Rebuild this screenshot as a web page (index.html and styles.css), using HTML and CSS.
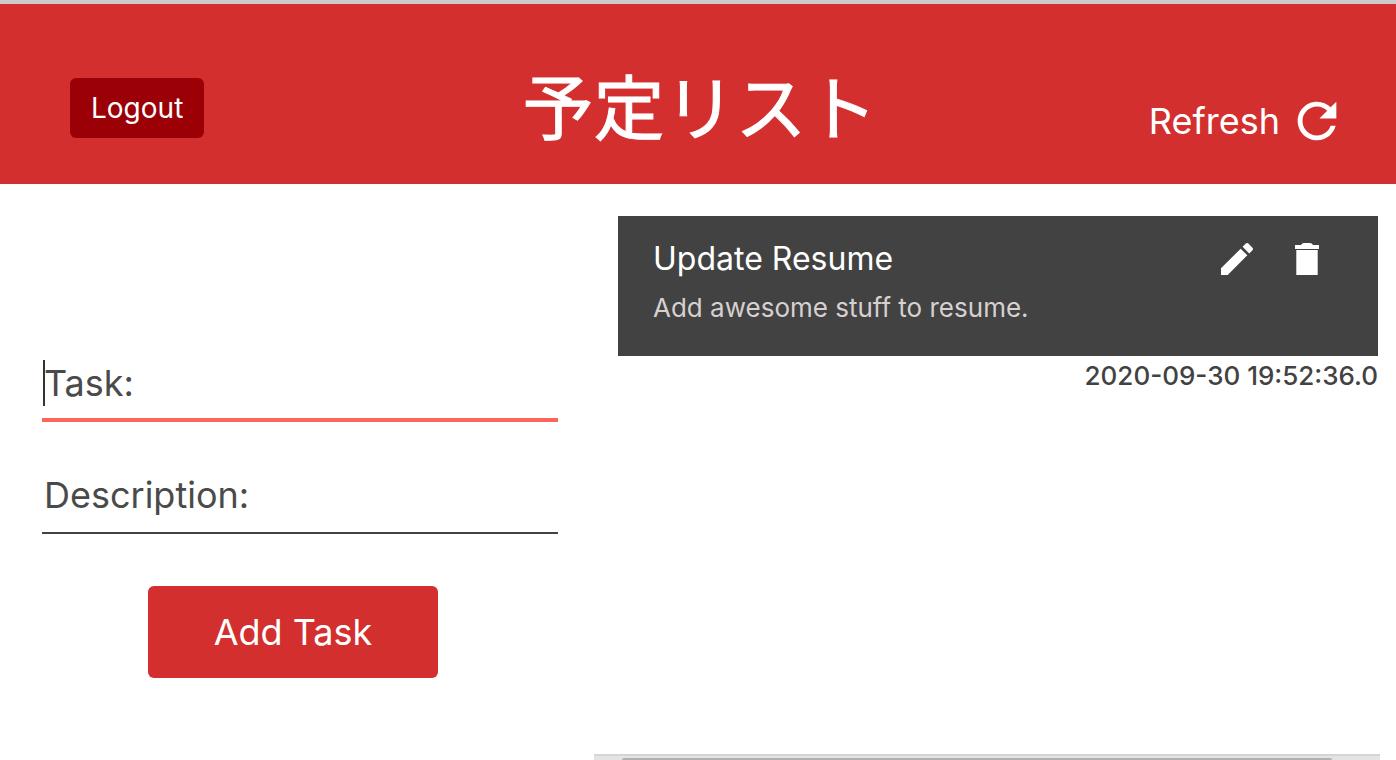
FILE: index.html
```
<!DOCTYPE html>
<html lang="ja">
<head>
<meta charset="utf-8">
<meta name="viewport" content="width=device-width, initial-scale=1">
<title>予定リスト</title>
<link rel="stylesheet" href="styles.css">
</head>
<body class="page">
<header class="header">
  <button class="logout" type="button">Logout</button>
  <h1 class="title">予定リスト</h1>
  <button class="refresh" type="button">
    <span>Refresh</span>
    <svg class="refresh-icon" viewBox="0 0 24 24" aria-hidden="true"><path fill="currentColor" d="M17.65 6.35C16.2 4.9 14.21 4 12 4c-4.42 0-7.99 3.58-7.99 8s3.57 8 7.99 8c3.73 0 6.84-2.55 7.73-6h-2.08c-.82 2.33-3.04 4-5.65 4-3.31 0-6-2.69-6-6s2.69-6 6-6c1.66 0 3.14.69 4.22 1.78L13 11h7V4l-2.35 2.35z"/></svg>
  </button>
</header>
<main class="main">
  <form class="form">
    <div class="field">
      <input class="input input-active" type="text" placeholder="Task:" aria-label="Task">
      <span class="caret"></span>
    </div>
    <div class="field">
      <input class="input" type="text" placeholder="Description:" aria-label="Description">
    </div>
    <button class="add" type="button">Add Task</button>
  </form>
  <section class="tasks">
    <div class="list">
      <article class="card">
        <div class="card-text">
          <h2 class="card-title">Update Resume</h2>
          <p class="card-description">Add awesome stuff to resume.</p>
        </div>
        <div class="actions">
          <button class="action" type="button" aria-label="Edit"><svg class="edit-icon" viewBox="3 3 18 18" aria-hidden="true"><path fill="currentColor" d="M3 17.25V21h3.75L17.81 9.94l-3.75-3.75L3 17.25zM20.71 7.04c.39-.39.39-1.02 0-1.41l-2.34-2.34c-.39-.39-1.02-.39-1.41 0l-1.83 1.83 3.75 3.75 1.83-1.83z"/></svg></button>
          <button class="action" type="button" aria-label="Delete"><svg class="delete-icon" viewBox="0 0 24 32" aria-hidden="true"><path fill="currentColor" d="M0 2h6q1-2 3-2h6q2 0 3 2h6v4H0zM1.300 7h21.400v25H1.300z"/></svg></button>
        </div>
      </article>
      <time class="time" datetime="2020-09-30T19:52:36">2020-09-30 19:52:36.0</time>
    </div>
    <div class="scroll-track"><div class="scroll-thumb"></div></div>
  </section>
</main>
</body>
</html>
```
FILE: styles.css
```
* {
  box-sizing: border-box;
}

.page {
  display: flex;
  flex-direction: column;
  height: 100vh;
  margin: 0;
  overflow: hidden;
  background: #fff;
  color: #424242;
  font-family: Inter, "Noto Sans CJK JP", sans-serif;
}

button,
input {
  margin: 0;
  padding: 0;
  border: 0;
  background: none;
  color: inherit;
  font: inherit;
}

.header {
  display: grid;
  grid-template-columns: 1fr auto 1fr;
  align-items: center;
  padding: 62px 50px 34px 54px;
  border-top: 4px solid #cbcbcb;
  background: #d32f2f;
  color: #fff;
}

.logout {
  justify-self: start;
  margin-left: 16px;
  padding: 13px 21px;
  border-radius: 6px;
  background: #9b0007;
  font-size: 28px;
  line-height: 34px;
}

.title {
  margin: 0;
  padding-bottom: 10px;
  font-family: "Noto Sans CJK JP", sans-serif;
  font-size: 71px;
  font-weight: 400;
  line-height: 74px;
  -webkit-text-stroke: 1px currentColor;
}

.refresh {
  display: flex;
  justify-self: end;
  align-self: end;
  align-items: center;
  gap: 8px;
  font-size: 36px;
}

.refresh-icon {
  width: 58px;
  height: 58px;
}

.main {
  display: grid;
  flex: 1;
  grid-template-columns: 594fr 802fr;
  min-height: 0;
}

.form {
  display: flex;
  flex-direction: column;
  padding: 172px 36px 0 42px;
}

.field {
  position: relative;
  display: flex;
  margin-bottom: 50px;
}

.input {
  width: 100%;
  height: 62px;
  padding: 0 2px 14px;
  border-bottom: 2px solid #424242;
  border-radius: 0;
  font-size: 36px;
}

.input-active {
  height: 66px;
  padding-bottom: 8px;
  border-bottom: 4px solid #ff6659;
}

.input::placeholder {
  color: #4a4a4a;
  opacity: 1;
}

.caret {
  position: absolute;
  top: 4px;
  left: 1px;
  width: 2px;
  height: 46px;
  background: #333;
}

.add {
  align-self: center;
  margin: 2px 14px 0 0;
  padding: 24px 66px;
  border-radius: 6px;
  background: #d32f2f;
  color: #fff;
  font-size: 36px;
  line-height: 44px;
}

.tasks {
  display: flex;
  flex-direction: column;
  margin-right: 16px;
}

.list {
  flex: 1;
  padding: 32px 2px 0 24px;
}

.card {
  display: flex;
  justify-content: space-between;
  padding: 23px 59px 30px 35px;
  background: #424242;
  color: #fff;
}

.card-title {
  margin: 0 0 11px;
  font-size: 32px;
  font-weight: 400;
  line-height: 40px;
}

.card-description {
  margin: 0;
  color: #d6d0d0;
  font-size: 26px;
  line-height: 36px;
}

.actions {
  display: flex;
  align-items: flex-start;
  gap: 42px;
  padding-top: 4px;
}

.action {
  display: flex;
}

.edit-icon {
  width: 32px;
  height: 32px;
}

.delete-icon {
  width: 24px;
  height: 32px;
}

.time {
  display: block;
  font-size: 26px;
  font-weight: 450;
  line-height: 40px;
  text-align: right;
}

.scroll-track {
  height: 6px;
  padding: 2px 48px 0 28px;
  border-top: 2px solid #d5d5d5;
  background: #e4e4e4;
}

.scroll-thumb {
  height: 2px;
  border-radius: 2px 2px 0 0;
  background: #b1b1b1;
}
```
